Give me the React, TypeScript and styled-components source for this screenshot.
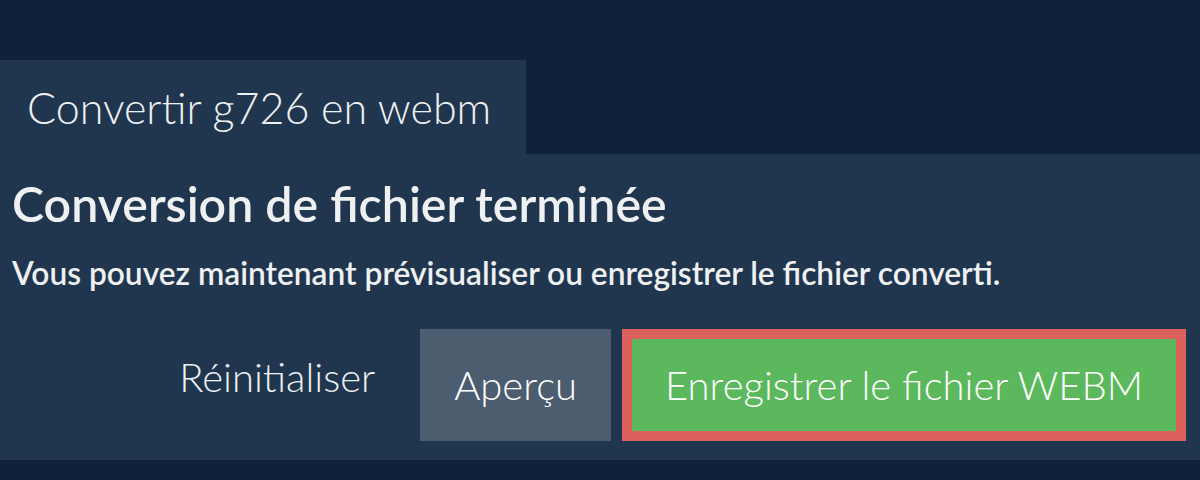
import React from 'react';
import styled, {createGlobalStyle} from 'styled-components';

const GlobalStyle = createGlobalStyle`
  html, body {
    margin: 0;
    padding: 0;
    background: #0f2239;
    font-family: Lato, "Open Sans", sans-serif;
    font-feature-settings: "calt" 0;
  }
`;

const Page = styled.div`
  padding-top: 60px;
  height: 480px;
  box-sizing: border-box;
`;

const Tab = styled.div`
  display: inline-flex;
  align-items: center;
  height: 94px;
  padding: 0 35px 0 27px;
  background: #20364e;
  color: #eef0f2;
  font-size: 43px;
  font-weight: 300;
`;

const Panel = styled.section`
  background: #20364e;
  height: 306px;
  padding: 21px 14px 0 12px;
  box-sizing: border-box;
  display: flex;
  flex-direction: column;
`;

const Title = styled.h1`
  margin: 0;
  font-size: 48.3px;
  font-weight: 600;
  color: #eef0f2;
  line-height: 1.2;
`;

const Lead = styled.p`
  margin: 21px 0 0;
  font-size: 31.7px;
  font-weight: 600;
  color: #eef0f2;
  line-height: 1.2;
`;

const Actions = styled.div`
  margin-top: 37px;
  display: flex;
  justify-content: flex-end;
  align-items: stretch;
  gap: 11px;
  height: 112px;
`;

const Button = styled.button<{$variant: 'link' | 'gray' | 'green'}>`
  font-family: inherit;
  font-size: 40px;
  font-weight: 300;
  line-height: 1.2;
  color: #ffffff;
  cursor: pointer;
  padding: 0 34px;
  box-sizing: border-box;
  border: ${p => p.$variant === 'green' ? '10px solid #dc605c' : 'none'};
  background: ${p => p.$variant === 'green' ? '#5cb85c' : p.$variant === 'gray' ? '#4b5d6f' : 'transparent'};
  ${p => p.$variant === 'green' && `padding: 0 33px;`}
  ${p => p.$variant === 'link' && `
    color: #eef0f2;
    padding-bottom: 16px;
  `}
`;

export default function App() {
  return (
    <Page>
      <GlobalStyle/>
      <Tab>Convertir g726 en webm</Tab>
      <Panel>
        <Title>Conversion de fichier terminée</Title>
        <Lead>Vous pouvez maintenant prévisualiser ou enregistrer le fichier converti.</Lead>
        <Actions>
          <Button $variant="link">Réinitialiser</Button>
          <Button $variant="gray">Aperçu</Button>
          <Button $variant="green">Enregistrer le fichier WEBM</Button>
        </Actions>
      </Panel>
    </Page>
  );
}
